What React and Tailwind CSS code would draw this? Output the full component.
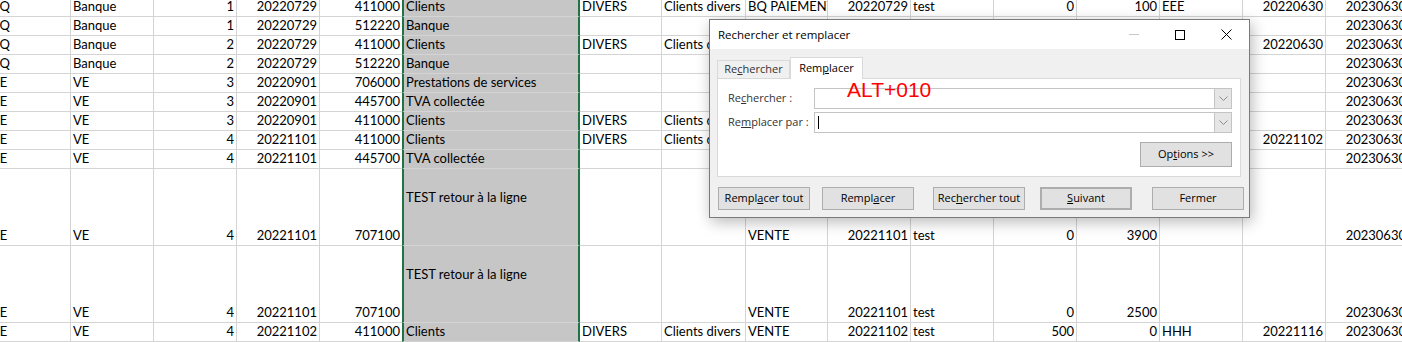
import React from 'react'

const cols = [
  { w: 'w-[71px]', right: false },
  { w: 'w-[83px]', right: false },
  { w: 'w-[83px]', right: true },
  { w: 'w-[83px]', right: true },
  { w: 'w-[82px]', right: true, noBorder: true },
  { w: 'w-[178px]', right: false, selected: true },
  { w: 'w-[82px]', right: false },
  { w: 'w-[84px]', right: false },
  { w: 'w-[82px]', right: false },
  { w: 'w-[83px]', right: true },
  { w: 'w-[83px]', right: false },
  { w: 'w-[83px]', right: true },
  { w: 'w-[83px]', right: true },
  { w: 'w-[83px]', right: false },
  { w: 'w-[83px]', right: true },
  { w: 'w-[83px]', right: true },
]

const rows = [
  { tall: false, cells: ['BQ', 'Banque', '1', '20220729', '411000', 'Clients', 'DIVERS', 'Clients divers', 'BQ PAIEMENT', '20220729', 'test', '0', '100', 'EEE', '20220630', '20230630'] },
  { tall: false, cells: ['BQ', 'Banque', '1', '20220729', '512220', 'Banque', '', '', 'BQ PAIEMENT', '20220729', 'test', '100', '0', '', '', '20230630'] },
  { tall: false, cells: ['BQ', 'Banque', '2', '20220729', '411000', 'Clients', 'DIVERS', 'Clients divers', 'BQ PAIEMENT', '20220729', 'test', '0', '200', 'FFF', '20220630', '20230630'] },
  { tall: false, cells: ['BQ', 'Banque', '2', '20220729', '512220', 'Banque', '', '', 'BQ PAIEMENT', '20220729', 'test', '200', '0', '', '', '20230630'] },
  { tall: false, cells: ['VE', 'VE', '3', '20220901', '706000', 'Prestations de services', '', '', 'VENTE', '20220901', 'test', '0', '1000', '', '', '20230630'] },
  { tall: false, cells: ['VE', 'VE', '3', '20220901', '445700', 'TVA collectée', '', '', 'VENTE', '20220901', 'test', '0', '200', '', '', '20230630'] },
  { tall: false, cells: ['VE', 'VE', '3', '20220901', '411000', 'Clients', 'DIVERS', 'Clients divers', 'VENTE', '20220901', 'test', '1200', '0', 'GGG', '', '20230630'] },
  { tall: false, cells: ['VE', 'VE', '4', '20221101', '411000', 'Clients', 'DIVERS', 'Clients divers', 'VENTE', '20221101', 'test', '7680', '0', 'HHH', '20221102', '20230630'] },
  { tall: false, cells: ['VE', 'VE', '4', '20221101', '445700', 'TVA collectée', '', '', 'VENTE', '20221101', 'test', '0', '1280', '', '', '20230630'] },
  { tall: true, cells: ['VE', 'VE', '4', '20221101', '707100', 'TEST retour à la ligne', '', '', 'VENTE', '20221101', 'test', '0', '3900', '', '', '20230630'] },
  { tall: true, cells: ['VE', 'VE', '4', '20221101', '707100', 'TEST retour à la ligne', '', '', 'VENTE', '20221101', 'test', '0', '2500', '', '', '20230630'] },
  { tall: false, cells: ['VE', 'VE', '4', '20221102', '411000', 'Clients', 'DIVERS', 'Clients divers', 'VENTE', '20221102', 'test', '500', '0', 'HHH', '20221116', '20230630'] },
]

function Cell({ col, value, index, tall }) {
  let cls = 'shrink-0 h-full flex items-end overflow-hidden whitespace-nowrap border-b border-[#d4d4d4] px-[2px] pb-[1px] leading-[17px] ' + col.w
  if (col.right) cls += ' justify-end'
  if (col.selected) cls += ' bg-[#c6c6c6] border-x-2 border-x-[#217346]'
  else if (!col.noBorder) cls += ' border-r'
  if (col.selected && tall) cls += ' pb-[39px]'
  return (
    <div className={cls}>
      <span className={index === 0 ? 'ml-[-11px]' : ''}>{value}</span>
    </div>
  )
}

function Btn({ children, className = '' }) {
  return (
    <div className={'h-[23px] w-[92px] shrink-0 flex items-center justify-center bg-[#e1e1e1] border border-[#adadad] text-black ' + className}>
      {children}
    </div>
  )
}

function Combo({ children }) {
  return (
    <div className="flex w-[418px] h-[21px] border border-[#c4c4c4] bg-white">
      <div className="flex-1 flex items-center pl-[3px]">{children}</div>
      <div className="w-[17px] bg-[#e6e6e6] border-l border-[#c4c4c4] flex items-center justify-center">
        <svg width="9" height="5" viewBox="0 0 9 5">
          <path d="M0.5 0.5 L4.5 4.5 L8.5 0.5" fill="none" stroke="#8a8a8a" strokeWidth="1" />
        </svg>
      </div>
    </div>
  )
}

function Dialog() {
  return (
    <div className="absolute left-[709px] top-[19px] w-[541px] h-[199px] bg-[#f0f0f0] border border-[#7a7a7a] shadow-[2px_4px_14px_rgba(0,0,0,0.28)] flex flex-col text-black font-['Open_Sans',sans-serif] text-[11px]">
      {/* title bar */}
      <div className="h-[29px] bg-white flex items-center">
        <div className="pl-[8px] text-[11.5px] flex-1">Rechercher et remplacer</div>
        <div className="w-[46px] h-full flex items-center justify-center">
          <div className="w-[10px] h-px bg-[#c8c8c8]" />
        </div>
        <div className="w-[46px] h-full flex items-center justify-center">
          <div className="w-[10px] h-[10px] border border-black" />
        </div>
        <div className="w-[46px] h-full flex items-center justify-center">
          <svg width="11" height="11" viewBox="0 0 11 11">
            <path d="M0.5 0.5 L10.5 10.5 M10.5 0.5 L0.5 10.5" stroke="black" strokeWidth="1" />
          </svg>
        </div>
      </div>

      {/* body */}
      <div className="flex-1 pl-[7px] pr-[8px] pt-[8px]">
        <div className="flex items-end h-[21px]">
          <div className="w-[73px] h-[18px] border border-b-0 border-[#d9d9d9] bg-[#f0f0f0] flex items-center justify-center text-[#333]">
            <span>Re<u>c</u>hercher</span>
          </div>
          <div className="w-[73px] h-[22px] border border-b-0 border-[#d9d9d9] bg-white flex items-center justify-center mb-[-1px] relative z-10">
            <span>Rem<u>p</u>lacer</span>
          </div>
        </div>
        <div className="h-[99px] bg-white border border-[#d9d9d9] pl-[10px] pr-[8px] pt-[9px] flex flex-col">
          <div className="flex items-center">
            <div className="w-[86px] text-[#333]">Re<u>c</u>hercher :</div>
            <Combo />
          </div>
          <div className="flex items-center mt-[3px]">
            <div className="w-[86px] text-[#333]">Re<u>m</u>placer par :</div>
            <Combo>
              <div className="w-px h-[13px] bg-black" />
            </Combo>
          </div>
          <div className="flex justify-end mt-[9px]">
            <Btn className="h-[25px] w-[91px]">Op<u>t</u>ions &gt;&gt;</Btn>
          </div>
        </div>
        <div className="flex mt-[10px] ml-[1px]">
          <Btn>Rempl<u>a</u>cer tout</Btn>
          <Btn className="ml-[12px]">Rempl<u>a</u>cer</Btn>
          <Btn className="ml-[19px]">Rec<u>h</u>ercher tout</Btn>
          <Btn className="ml-[15px] border-2 border-[#0078d7]"><u>S</u>uivant</Btn>
          <Btn className="ml-[20px]">Fermer</Btn>
        </div>
      </div>

      {/* note typed over the field */}
      <div className="absolute left-[137px] top-[59px] text-[21px] leading-[21px] text-[#ff0000] font-['Liberation_Sans',Arial,sans-serif]">
        ALT+010
      </div>
    </div>
  )
}

export default function App() {
  return (
    <div className="relative w-[1402px] h-[342px] overflow-hidden bg-white text-black font-['Lato',sans-serif] text-[13px]">
      <div className="flex flex-col mt-[-2px]">
        {rows.map((row, r) => (
          <div key={r} className={'flex ' + (row.tall ? 'h-[77px]' : 'h-[19px]')}>
            {cols.map((col, c) => (
              <Cell key={c} col={col} value={row.cells[c]} index={c} tall={row.tall} />
            ))}
          </div>
        ))}
      </div>
      <Dialog />
    </div>
  )
}
